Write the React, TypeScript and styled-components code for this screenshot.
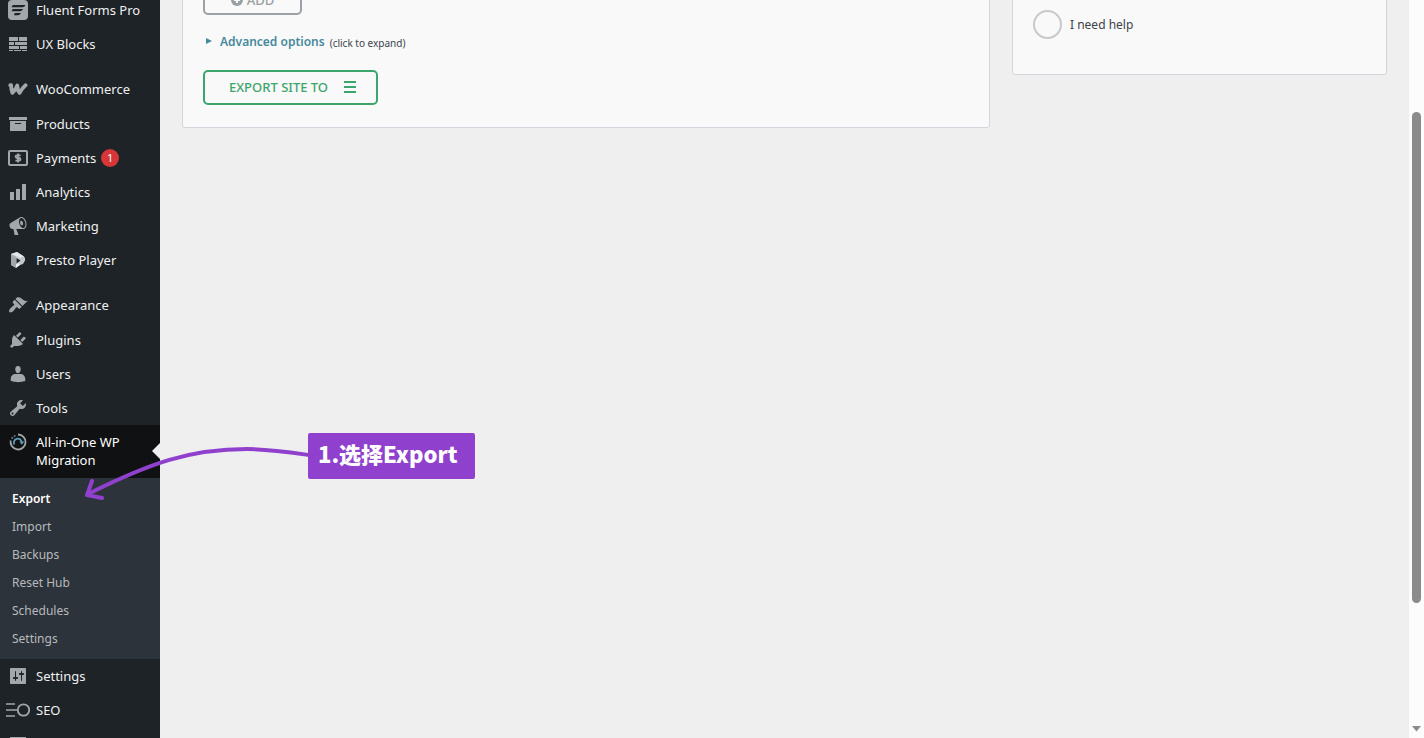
import React from "react";
import styled, { createGlobalStyle, css } from "styled-components";

const GlobalStyle = createGlobalStyle`
  *, *::before, *::after { box-sizing: border-box; }
  body {
    margin: 0;
    background: #efefef;
    color: #3c434a;
    font-family: "Noto Sans", "Open Sans", "Noto Sans CJK SC", sans-serif;
    font-size: 13px;
    line-height: 18px;
  }
`;

const Shell = styled.div`
  position: relative;
  display: grid;
  grid-template-columns: 160px minmax(0, 1fr) 15px;
  height: 100vh;
  overflow: hidden;
`;

const Sidebar = styled.nav`
  background: #1d2327;
  overflow: hidden;
`;

const Menu = styled.ul`
  list-style: none;
  margin: -7px 0 0;
  padding: 0;
`;

const MenuItem = styled.li<{ $spaced?: boolean }>`
  ${(p) =>
    p.$spaced &&
    css`
      margin-top: 11px;
      padding-bottom: 1px;
    `}
`;

const MenuLink = styled.a<{ $current?: boolean }>`
  position: relative;
  display: flex;
  align-items: flex-start;
  min-height: 34px;
  padding: 8px 12px 8px 0;
  color: #f0f0f1;
  text-decoration: none;
  ${(p) =>
    p.$current &&
    css`
      min-height: 53px;
      background: #101112;
      color: #fff;
      &::after {
        content: "";
        position: absolute;
        right: 0;
        top: 18px;
        border: 8px solid transparent;
        border-left-width: 0;
        border-right-color: #efefef;
      }
    `}
`;

const IconSlot = styled.span`
  flex: none;
  display: flex;
  justify-content: center;
  align-items: center;
  width: 36px;
  height: 18px;
  color: #a2a7ab;
`;

const Count = styled.span`
  flex: none;
  width: 18px;
  height: 18px;
  margin-left: 5px;
  border-radius: 50%;
  background: #d63638;
  color: #fff;
  font-size: 11px;
  text-align: center;
`;

const SubMenu = styled.ul`
  list-style: none;
  margin: 0;
  padding: 7px 0 6px;
  background: #2d333a;
`;

const SubLink = styled.a<{ $current?: boolean }>`
  display: block;
  padding: 5px 12px;
  color: ${(p) => (p.$current ? "#fff" : "#b7babd")};
  font-size: 12px;
  font-weight: ${(p) => (p.$current ? 600 : 400)};
  text-decoration: none;
`;

const Content = styled.main`
  display: grid;
  grid-template-columns: minmax(0, 1fr) 375px;
  gap: 22px;
  align-items: start;
  padding: 0 22px;
`;

const Card = styled.section`
  margin-top: -40px;
  padding: 19px 20px 22px;
  border: 1px solid #d4d4da;
  border-radius: 3px;
  background: #f9f9f9;
`;

const OutlineButton = styled.button<{ $tone: string; $wide?: boolean }>`
  display: flex;
  align-items: center;
  justify-content: center;
  gap: ${(p) => (p.$wide ? 16 : 4)}px;
  width: ${(p) => (p.$wide ? 175 : 99)}px;
  height: 35px;
  padding: ${(p) => (p.$wide ? "0 0 2px 4px" : "4px 0 0")};
  border: 2px solid ${(p) => p.$tone};
  border-radius: 5px;
  background: transparent;
  color: ${(p) => p.$tone};
  font: 500 13px/18px "Noto Sans", sans-serif;
`;

const Advanced = styled.details`
  margin: 17px 0 18px;
`;

const AdvancedSummary = styled.summary`
  display: flex;
  align-items: center;
  height: 20px;
  padding-left: 3px;
  list-style: none;
  color: #46899c;
  font-weight: 600;
  font-size: 12px;
`;

const Caret = styled.svg`
  margin: 0 8px 2px 0;
`;

const Hint = styled.small`
  margin: 2px 0 0 5px;
  color: #3c434a;
  font-weight: 400;
  font-size: 10px;
`;

const FeedbackChoice = styled.label`
  display: flex;
  align-items: center;
  gap: 8px;
  margin: 30px 0 13px;
  font-size: 12px;
`;

const Radio = styled.input`
  appearance: none;
  width: 29px;
  height: 29px;
  margin: 0;
  border: 2px solid #c9c9c9;
  border-radius: 50%;
`;

const ScrollTrack = styled.div`
  display: grid;
  grid-template-rows: 112fr 491fr 135fr;
  justify-content: center;
  background: #fcfcfc;
`;

const ScrollThumb = styled.div`
  grid-row: 2;
  width: 9px;
  border-radius: 5px;
  background: #8b8b8b;
`;

const ScrollArrow = styled.svg`
  grid-row: 3;
  align-self: end;
  margin-bottom: 6px;
`;

const Callout = styled.div`
  position: absolute;
  left: 308px;
  top: 433px;
  width: 167px;
  height: 46px;
  padding: 0 10px;
  border-radius: 2px;
  background: #8f41cd;
  color: #fff;
  font: 900 22px/40px "Noto Sans CJK SC", sans-serif;
  white-space: nowrap;
`;

const CalloutArrow = styled.svg`
  position: absolute;
  left: 80px;
  top: 440px;
  pointer-events: none;
`;

const Glyph = ({ d, size = 18 }: { d: string; size?: number }) => (
  <svg width={size} height={size} viewBox="0 0 20 20" fill="currentColor" fillRule="evenodd" aria-hidden="true">
    <path d={d} />
  </svg>
);

const FluentIcon = () => (
  <svg width="20" height="20" viewBox="0 0 20 20" aria-hidden="true">
    <rect width="20" height="20" rx="4" fill="currentColor" />
    <path d="M5.500 5h12q-1 2.200-3 2.200H3.700q.2-2.200 1.800-2.200zM5.500 9h9.500q-1 2.200-3 2.200H3.700q.2-2.200 1.800-2.200zM7.500 13h5.400q-1 2.200-3 2.200H6q0-2.200 1.500-2.200z" fill="#1d2327" />
  </svg>
);

const BlocksIcon = () => (
  <svg width="20" height="14" viewBox="0 0 20 14" fill="currentColor" aria-hidden="true">
    <path d="M1 0h9v4H1zM11 0h8v4h-8zM1 5h5v3H1zM7 5h12v3H7zM1 9h10v3H1zM12 9h7v3h-7zM1 13h4v1H1zM6 13h7v1H6zM14 13h5v1h-5z" />
  </svg>
);

const WooIcon = () => (
  <svg width="20" height="12" viewBox="0 0 20 12" fill="none" stroke="currentColor" strokeWidth="3.800" strokeLinecap="round" strokeLinejoin="round" aria-hidden="true">
    <path d="M2.200 2.200h1Q3 7 4.400 9.800Q7.600 7 9.300 2.500Q9.400 7.600 11.600 9.800Q14.500 5 17.600 2.200" />
  </svg>
);

const PaymentsIcon = () => (
  <svg width="20" height="16" viewBox="0 0 20 16" fill="none" stroke="currentColor" aria-hidden="true">
    <rect x="1" y="1" width="18" height="14" rx="1" strokeWidth="2" />
    <path d="M12.600 5.400H9Q7.600 5.400 7.600 6.600T9 8h2q1.400 0 1.400 1.300T11 10.600H7.400M10 3.400v9.200" strokeWidth="1.900" />
  </svg>
);

const PrestoIcon = () => (
  <svg width="16" height="18" viewBox="0 0 16 18" aria-hidden="true">
    <path d="M1 3l6-2 7 4.500q1.500 1.500 1 4L13 13l-6 2-1 2-5-3z" fill="#c3c6c9" />
    <path d="M1 3l5 3v10l-5-2z" fill="#a2a7ab" />
    <path d="M1 3l6-2 7 4.500L10 7 6 5z" fill="#e4e6e7" />
    <path d="M6.500 7l4 2.500-4 3z" fill="#1d2327" />
    <path d="M6 13.500l3-1.500 1 2-4 3z" fill="#f0f0f1" />
  </svg>
);

const MigrationIcon = () => (
  <svg width="18" height="18" viewBox="0 0 18 18" fill="none" aria-hidden="true">
    <path d="M9 1.500a7.500 7.500 0 1 1-7.300 6" stroke="#a2a7ab" strokeWidth="1.800" />
    <path d="M2.500 5.500L7 2" stroke="#6f767c" strokeWidth="1.600" strokeDasharray="2 1" />
    <path d="M5.300 11.500A4 4 0 1 1 12.800 9" stroke="#5c9ab8" strokeWidth="1.800" />
    <path d="M10.300 8.500h5l-2.500 3.200z" fill="#5c9ab8" />
  </svg>
);

const SeoIcon = () => (
  <svg width="24" height="16" viewBox="0 0 24 16" fill="none" stroke="currentColor" strokeWidth="1.500" aria-hidden="true">
    <path d="M0 2h9M0 8h11M0 14h9" />
    <circle cx="17.500" cy="8" r="5.700" strokeWidth="1.800" />
  </svg>
);

const paths = {
  archive: "M19 3v3H1V3h18zM2 7h16v10H2V7zm11 3V9H7v1h6z",
  bars: "M18 18V2h-4v16h4zm-6 0V7H8v11h4zm-6 0v-8H2v8h4z",
  megaphone:
    "M18.15 5.940c.46 1.620.38 3.220-.02 4.480-.42 1.280-1.260 2.180-2.300 2.480-.16.06-.26.06-.4.06-.06.02-.12.02-.18.02-.06.02-.14.02-.22.02h-6.800l2.220 5.500c.02.14-.06.26-.14.34-.08.1-.24.16-.34.16H6.950c-.1 0-.26-.06-.34-.16-.08-.08-.16-.2-.14-.34l-1-5.500H4.250l-.02-.02c-.5.06-1.080-.18-1.540-.62s-.88-1.080-1.060-1.880c-.24-.8-.2-1.560-.02-2.200.18-.62.58-1.080 1.060-1.300l.02-.02 9-5.400c.1-.06.18-.1.24-.16.06-.04.14-.08.24-.12.16-.08.28-.12.5-.18 1.040-.3 2.240.1 3.220.98s1.840 2.240 2.260 3.860zm-2.580 5.980h-.02c.4-.1.74-.34 1.040-.7.58-.7.86-1.760.86-3.040 0-.64-.1-1.300-.28-1.980-.34-1.360-1.020-2.500-1.780-3.240s-1.680-1.100-2.460-.88c-.82.22-1.400.96-1.700 2-.32 1.040-.28 2.360.06 3.720.38 1.360 1 2.500 1.800 3.240.78.74 1.620 1.100 2.480.88zm-2.540-7.080c.22-.04.42-.02.62.04.38.16.76.48 1.020 1s.42 1.200.42 1.780c0 .3-.04.56-.12.8-.18.48-.44.84-.86.94-.34.1-.8-.06-1.140-.4s-.64-.86-.78-1.500c-.18-.62-.12-1.240.02-1.720s.48-.84.82-.94z",
  brush:
    "M14.48 11.06L7.41 3.99l1.5-1.5c.5-.56 2.3-.47 3.51.32 1.21.8 1.43 1.28 2.91 2.1 1.18.64 2.45 1.26 4.45.85zm-.71.71L6.7 4.7 4.93 6.47c-.39.39-.39 1.02 0 1.41l1.06 1.06c.39.39.39 1.03 0 1.42-.6.6-1.43 1.11-2.21 1.69-.35.26-.7.53-1.01.84C1.43 14.23.4 16.08 1.4 17.07c.99 1 2.84-.03 4.18-1.36.31-.31.58-.66.85-1.02.57-.78 1.08-1.61 1.69-2.21.39-.39 1.02-.39 1.41 0l1.06 1.06c.39.39 1.02.39 1.41 0z",
  plug: "M13.11 4.36L9.87 7.6 8 5.73l3.24-3.24c.35-.34 1.05-.2 1.56.32.52.51.66 1.21.31 1.55zm-8 1.77l.91-1.12 9.01 9.01-1.19.84c-.71.71-2.63 1.16-3.82 1.16H6.14L4.9 17.26c-.59.59-1.54.59-2.12 0-.59-.58-.59-1.53 0-2.12l1.24-1.24v-3.88c0-1.13.4-3.19 1.09-3.89zm7.26 3.97l3.24-3.24c.34-.35 1.04-.21 1.55.31.52.51.66 1.21.31 1.55l-3.24 3.25z",
  user: "M10 9.25c-2.27 0-2.73-3.44-2.73-3.44C7 4.02 7.82 2 9.97 2c2.16 0 2.98 2.02 2.71 3.81 0 0-.41 3.44-2.68 3.44zM7.2 10h5.500c2.390 0 4.540 2.330 4.540 4.530v2.490s-3.650 1.130-7.240 1.130c-3.650 0-7.240-1.130-7.240-1.130v-2.490c0-2.250 1.940-4.530 4.440-4.530z",
  wrench:
    "M16.68 9.77c-1.34 1.34-3.3 1.67-4.95.99l-5.41 6.52c-.99.99-2.59.99-3.58 0s-.99-2.59 0-3.57l6.52-5.42c-.68-1.65-.35-3.61.99-4.95 1.28-1.28 3.12-1.62 4.72-1.06l-2.89 2.89 2.82 2.82 2.86-2.87c.53 1.58.18 3.39-1.08 4.65zM3.81 16.21c.4.39 1.04.39 1.43 0 .4-.4.4-1.04 0-1.43-.39-.4-1.03-.4-1.43 0-.39.39-.39 1.03 0 1.43z",
  sliders:
    "M18 17V3c0-.6-.4-1-1-1H3c-.6 0-1 .4-1 1v14c0 .6.4 1 1 1h14c.6 0 1-.4 1-1zM8 11h1c.55 0 1 .45 1 1s-.45 1-1 1H8v1.5c0 .28-.22.5-.5.5s-.5-.22-.5-.5V13H6c-.55 0-1-.45-1-1s.45-1 1-1h1V5.5c0-.28.22-.5.5-.5s.5.22.5.5V11zm5-2h-1c-.55 0-1-.45-1-1s.45-1 1-1h1V5.5c0-.28.22-.5.5-.5s.5.22.5.5V7h1c.55 0 1 .45 1 1s-.45 1-1 1h-1v5.5c0 .28-.22.5-.5.5s-.5-.22-.5-.5V9z",
  panel: "M2 3h16v15H2z",
};

type Entry = {
  label: string;
  icon: React.ReactNode;
  spaced?: boolean;
  count?: number;
  children?: string[];
};

const entries: Entry[] = [
  { label: "Fluent Forms Pro", icon: <FluentIcon /> },
  { label: "UX Blocks", icon: <BlocksIcon /> },
  { label: "WooCommerce", icon: <WooIcon />, spaced: true },
  { label: "Products", icon: <Glyph d={paths.archive} size={20} /> },
  { label: "Payments", icon: <PaymentsIcon />, count: 1 },
  { label: "Analytics", icon: <Glyph d={paths.bars} size={20} /> },
  { label: "Marketing", icon: <Glyph d={paths.megaphone} size={20} /> },
  { label: "Presto Player", icon: <PrestoIcon /> },
  { label: "Appearance", icon: <Glyph d={paths.brush} size={20} />, spaced: true },
  { label: "Plugins", icon: <Glyph d={paths.plug} size={20} /> },
  { label: "Users", icon: <Glyph d={paths.user} size={20} /> },
  { label: "Tools", icon: <Glyph d={paths.wrench} size={20} /> },
  {
    label: "All-in-One WP Migration",
    icon: <MigrationIcon />,
    children: ["Export", "Import", "Backups", "Reset Hub", "Schedules", "Settings"],
  },
  { label: "Settings", icon: <Glyph d={paths.sliders} size={20} /> },
  { label: "SEO", icon: <SeoIcon /> },
  { label: "", icon: <Glyph d={paths.panel} size={20} /> },
];

export default function App() {
  return (
    <>
      <GlobalStyle />
      <Shell>
        <Sidebar aria-label="Main menu">
          <Menu>
            {entries.map((e, i) => (
              <MenuItem key={i} $spaced={e.spaced}>
                <MenuLink href="#" $current={!!e.children}>
                  <IconSlot>{e.icon}</IconSlot>
                  <span>{e.label}</span>
                  {e.count && <Count>{e.count}</Count>}
                </MenuLink>
                {e.children && (
                  <SubMenu>
                    {e.children.map((c, j) => (
                      <li key={c}>
                        <SubLink href="#" $current={j === 0}>
                          {c}
                        </SubLink>
                      </li>
                    ))}
                  </SubMenu>
                )}
              </MenuItem>
            ))}
          </Menu>
        </Sidebar>

        <Content>
          <Card>
            <OutlineButton type="button" $tone="#9aa0a3">
              <svg width="12" height="12" viewBox="0 0 12 12" aria-hidden="true">
                <circle cx="6" cy="6" r="6" fill="currentColor" />
                <path d="M6 3v6M3 6h6" stroke="#f9f9f9" strokeWidth="2" />
              </svg>
              ADD
            </OutlineButton>
            <Advanced>
              <AdvancedSummary>
                <Caret width="6" height="6" viewBox="0 0 6 6" aria-hidden="true">
                  <path d="M0 0l6 3-6 3z" fill="currentColor" />
                </Caret>
                Advanced options <Hint>(click to expand)</Hint>
              </AdvancedSummary>
            </Advanced>
            <OutlineButton type="button" $tone="#3ba56c" $wide>
              EXPORT SITE TO
              <svg width="12" height="12" viewBox="0 0 12 12" fill="currentColor" aria-hidden="true">
                <path d="M0 0h12v2H0zM0 5h12v2H0zM0 10h12v2H0z" />
              </svg>
            </OutlineButton>
          </Card>
          <Card>
            <FeedbackChoice>
              <Radio type="radio" name="feedback" />
              I need help
            </FeedbackChoice>
          </Card>
        </Content>

        <ScrollTrack aria-hidden="true">
          <ScrollThumb />
          <ScrollArrow width="9" height="6" viewBox="0 0 9 6">
            <path d="M0 0h9L4.500 5.500z" fill="#8b8b8b" />
          </ScrollArrow>
        </ScrollTrack>

        <CalloutArrow width="232" height="66" viewBox="80 440 232 66" fill="none" stroke="#8f41cd" strokeWidth="4" strokeLinecap="round" strokeLinejoin="round" aria-hidden="true">
          <path d="M309 455C288 452 268 449 247 449C190 449 150 463 88 494M92 481L87 495L102 498" />
        </CalloutArrow>
        <Callout>1.选择Export</Callout>
      </Shell>
    </>
  );
}
